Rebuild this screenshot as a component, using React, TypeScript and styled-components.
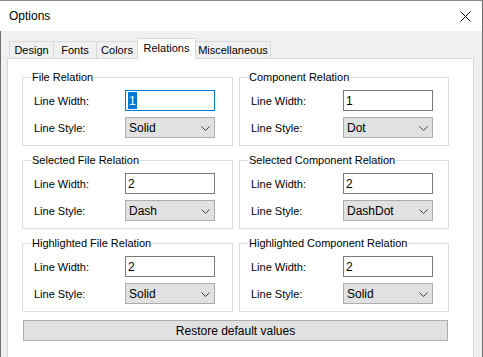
import React from 'react'
import styled, { createGlobalStyle } from 'styled-components'

const GlobalStyle = createGlobalStyle`
  html, body {
    margin: 0;
    padding: 0;
    overflow: hidden;
    background: #ffffff;
  }
  * {
    box-sizing: border-box;
  }
`

const Window = styled.div`
  width: 483px;
  height: 372px;
  display: flex;
  flex-direction: column;
  font-family: "Liberation Sans", Arial, sans-serif;
  font-size: 11px;
  color: #000000;
`

const TitleBar = styled.div`
  height: 31px;
  flex: none;
  display: flex;
  align-items: center;
  justify-content: space-between;
  padding: 0 11px 0 9px;
  background: #ffffff;
  border-top: 1px solid #8a8a8a;
  border-right: 1px solid #6f6f6f;
`

const Title = styled.span`
  font-size: 12px;
`

const Body = styled.div`
  flex: 1;
  display: flex;
  flex-direction: column;
  padding: 7px 8px 0 6px;
  background: #f0f0f0;
  border-left: 1px solid #6f6f6f;
  border-right: 1px solid #6f6f6f;
`

const TabStrip = styled.div`
  display: flex;
  align-items: flex-end;
  padding-left: 2px;
  position: relative;
  z-index: 1;
`

const Tab = styled.div<{ $width: number; $active?: boolean }>`
  width: ${p => p.$width}px;
  height: ${p => (p.$active ? 21 : 17)}px;
  margin-bottom: ${p => (p.$active ? -1 : 0)}px;
  display: flex;
  align-items: center;
  justify-content: center;
  padding-bottom: ${p => (p.$active ? 3 : 0)}px;
  border: 1px solid #d9d9d9;
  border-bottom: none;
  background: ${p => (p.$active ? '#ffffff' : '#f0f0f0')};
  position: relative;
  z-index: ${p => (p.$active ? 2 : 1)};
  & + & {
    margin-left: -1px;
  }
`

const Page = styled.div`
  flex: 1;
  display: flex;
  flex-direction: column;
  padding: 11px 24px 0 14px;
  background: #ffffff;
  border: 1px solid #d9d9d9;
`

const GroupGrid = styled.div`
  display: grid;
  grid-template-columns: 211px 210px;
  column-gap: 6px;
  row-gap: 7px;
`

const Group = styled.fieldset`
  margin: 0;
  min-width: 0;
  padding: 6px 8px 7px 8px;
  border: 1px solid #dcdcdc;
`

const Caption = styled.legend`
  padding: 0 1px;
  line-height: 14px;
`

const Rows = styled.div<{ $labelWidth: number }>`
  display: grid;
  grid-template-columns: ${p => p.$labelWidth}px 90px;
  align-items: center;
  row-gap: 6px;
  padding-left: 3px;
`

const Label = styled.span`
  padding-top: 1px;
`

const TextBox = styled.div<{ $focused?: boolean }>`
  height: 21px;
  display: flex;
  align-items: center;
  padding: 1px 2px 0 2px;
  border: 1px solid ${p => (p.$focused ? '#0078d7' : '#7a7a7a')};
  background: #ffffff;
  font-size: 12px;
`

const Selection = styled.span`
  display: flex;
  align-items: center;
  height: 17px;
  margin-top: -1px;
  padding: 0 1px;
  background: #0078d7;
  color: #ffffff;
`

const ComboBox = styled.div`
  height: 21px;
  display: flex;
  align-items: center;
  justify-content: space-between;
  padding: 1px 4px 0 3px;
  border: 1px solid #adadad;
  background: #e1e1e1;
  font-size: 12px;
`

const Button = styled.div`
  height: 21px;
  margin: 8px 1px 0 1px;
  display: flex;
  align-items: center;
  justify-content: center;
  border: 1px solid #adadad;
  background: #e1e1e1;
  font-size: 12px;
`

const Chevron = () => (
  <svg width="9" height="5" viewBox="0 0 9 5">
    <path d="M0.5 0.5 L4.5 4.5 L8.5 0.5" fill="none" stroke="#404040" strokeWidth="1" />
  </svg>
)

const CloseIcon = () => (
  <svg width="11" height="11" viewBox="0 0 11 11">
    <path d="M0.5 0.5 L10.5 10.5 M10.5 0.5 L0.5 10.5" fill="none" stroke="#000000" strokeWidth="1" />
  </svg>
)

interface Relation {
  title: string;
  width: string;
  style: string;
  focused?: boolean;
}

const relations: Relation[] = [
  { title: 'File Relation', width: '1', style: 'Solid', focused: true },
  { title: 'Component Relation', width: '1', style: 'Dot' },
  { title: 'Selected File Relation', width: '2', style: 'Dash' },
  { title: 'Selected Component Relation', width: '2', style: 'DashDot' },
  { title: 'Highlighted File Relation', width: '2', style: 'Solid' },
  { title: 'Highlighted Component Relation', width: '2', style: 'Solid' },
]

const tabs = [
  { name: 'Design', width: 45 },
  { name: 'Fonts', width: 44 },
  { name: 'Colors', width: 42 },
  { name: 'Relations', width: 59, active: true },
  { name: 'Miscellaneous', width: 76 },
]

const App = () => {
  return (
    <>
      <GlobalStyle />
      <Window>
        <TitleBar>
          <Title>Options</Title>
          <CloseIcon />
        </TitleBar>
        <Body>
          <TabStrip>
            {tabs.map(t => (
              <Tab key={t.name} $width={t.width} $active={t.active}>{t.name}</Tab>
            ))}
          </TabStrip>
          <Page>
            <GroupGrid>
              {relations.map((r, i) => (
                <Group key={r.title}>
                  <Caption>{r.title}</Caption>
                  <Rows $labelWidth={i % 2 === 0 ? 91 : 92}>
                    <Label>Line Width:</Label>
                    <TextBox $focused={r.focused}>
                      {r.focused ? <Selection>{r.width}</Selection> : r.width}
                    </TextBox>
                    <Label>Line Style:</Label>
                    <ComboBox>
                      <span>{r.style}</span>
                      <Chevron />
                    </ComboBox>
                  </Rows>
                </Group>
              ))}
            </GroupGrid>
            <Button>Restore default values</Button>
          </Page>
        </Body>
      </Window>
    </>
  )
}

export default App
